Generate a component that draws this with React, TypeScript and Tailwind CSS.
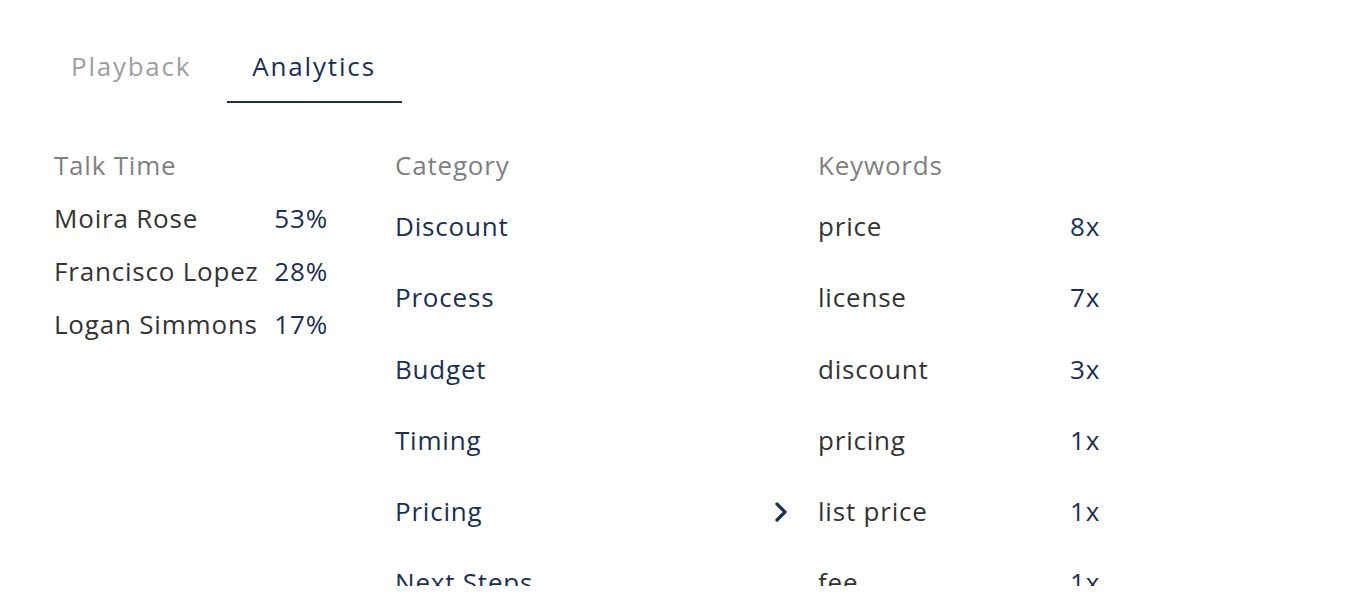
import React from "react";

const talk = [
  { name: "Moira Rose", pct: "53%" },
  { name: "Francisco Lopez", pct: "28%" },
  { name: "Logan Simmons", pct: "17%" },
];

const categories = ["Discount", "Process", "Budget", "Timing", "Pricing", "Next Steps"];

const keywords = [
  { word: "price", count: "8x" },
  { word: "license", count: "7x" },
  { word: "discount", count: "3x" },
  { word: "pricing", count: "1x" },
  { word: "list price", count: "1x" },
  { word: "fee", count: "1x" },
];

function Chevron() {
  return (
    <svg width="14" height="22" viewBox="0 0 14 22" fill="none">
      <polyline
        points="3,3 11,11 3,19"
        stroke="#1b2f52"
        strokeWidth="3.2"
        strokeLinecap="round"
        strokeLinejoin="round"
      />
    </svg>
  );
}

export default function App() {
  return (
    <div className="w-[1352px] h-[596px] bg-white overflow-hidden font-['Open_Sans',_sans-serif] text-[26px]">
      <div className="flex pl-[46px] pt-[30px]">
        <div className="px-[25px] pt-[18px] pb-[17px] border-b-2 border-transparent leading-[36px] tracking-[1.75px] text-[#9e9e9e]">
          Playback
        </div>
        <div className="ml-[11px] pl-[25px] pr-[26px] pt-[18px] pb-[17px] border-b-2 border-[#1b2f52] leading-[36px] tracking-[1.85px] text-[#1b2f52]">
          Analytics
        </div>
      </div>

      <div className="mt-[36px] h-[447px] overflow-hidden flex pl-[54px] tracking-[0.8px]">
        <div className="w-[341px] shrink-0">
          <div className="leading-[53px] text-[#7f7f7f]">Talk Time</div>
          <div className="w-[274px]">
            {talk.map((t) => (
              <div key={t.name} className="flex justify-between leading-[53px]">
                <span className="text-[#333333]">{t.name}</span>
                <span className="text-[#1b2f52]">{t.pct}</span>
              </div>
            ))}
          </div>
        </div>

        <div className="w-[423px] shrink-0">
          <div className="leading-[53px] text-[#7f7f7f]">Category</div>
          <div className="-mt-[1px]">
            {categories.map((c) => (
              <div key={c} className="h-[71.25px] flex items-center pr-[30px] text-[#1b2f52]">
                <span className="flex-1">{c}</span>
                {c === "Pricing" && <Chevron />}
              </div>
            ))}
          </div>
        </div>

        <div className="flex-1">
          <div className="leading-[53px] text-[#7f7f7f]">Keywords</div>
          <div className="-mt-[1px]">
            {keywords.map((k) => (
              <div key={k.word} className="h-[71.25px] flex items-center">
                <span className="w-[252px] text-[#333333]">{k.word}</span>
                <span className="text-[#1b2f52]">{k.count}</span>
              </div>
            ))}
          </div>
        </div>
      </div>
    </div>
  );
}
